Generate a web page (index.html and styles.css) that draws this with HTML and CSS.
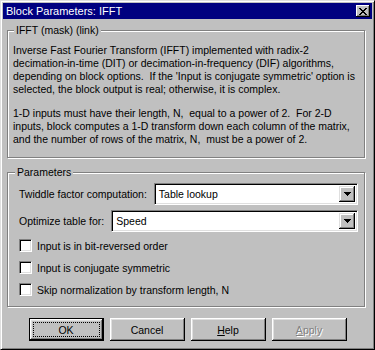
FILE: index.html
```html
<!DOCTYPE html>
<html lang="en">
<head>
  <meta charset="UTF-8">
  <title>Block Parameters: IFFT</title>
  <link rel="stylesheet" href="styles.css">
</head>
<body>
<div class="window">
  <div class="titlebar">
    <span class="title">Block Parameters: IFFT</span>
    <span class="close">
      <svg width="8" height="7" viewBox="0 0 8 7" shape-rendering="crispEdges">
        <path d="M0 0h2v1h1v1h2V1h1V0h2v1H7v1H6v1H5v1h1v1h1v1h1v1H6V6H5V5H3v1H2v1H0V6h1V5h1V4h1V3H2V2H1V1H0z" fill="#000"/>
      </svg>
    </span>
  </div>

  <div class="content">
    <fieldset class="group desc">
      <legend>IFFT (mask) (link)</legend>
      <p>Inverse Fast Fourier Transform (IFFT) implemented with radix-2<br>
decimation-in-time (DIT) or decimation-in-frequency (DIF) algorithms,<br>
depending on block options.&nbsp; If the 'Input is conjugate symmetric' option is<br>
selected, the block output is real; otherwise, it is complex.</p>
      <p>1-D inputs must have their length, N,&nbsp; equal to a power of 2.&nbsp; For 2-D<br>
inputs, block computes a 1-D transform down each column of the matrix,<br>
and the number of rows of the matrix, N,&nbsp; must be a power of 2.</p>
    </fieldset>

    <fieldset class="group params">
      <legend>Parameters</legend>
      <div class="row">
        <label>Twiddle factor computation:</label>
        <div class="combo">
          <span class="value">Table lookup</span>
          <span class="drop">
            <svg width="7" height="4" viewBox="0 0 7 4" shape-rendering="crispEdges"><path d="M0 0h7v1H6v1H5v1H4v1H3V3H2V2H1V1H0z" fill="#000"/></svg>
          </span>
        </div>
      </div>
      <div class="row">
        <label>Optimize table for:</label>
        <div class="combo">
          <span class="value">Speed</span>
          <span class="drop">
            <svg width="7" height="4" viewBox="0 0 7 4" shape-rendering="crispEdges"><path d="M0 0h7v1H6v1H5v1H4v1H3V3H2V2H1V1H0z" fill="#000"/></svg>
          </span>
        </div>
      </div>
      <div class="check first"><span class="box"></span>Input is in bit-reversed order</div>
      <div class="check"><span class="box"></span>Input is conjugate symmetric</div>
      <div class="check"><span class="box"></span>Skip normalization by transform length, N</div>
    </fieldset>

    <div class="buttons">
      <button class="btn default"><span class="focus">OK</span></button>
      <button class="btn">Cancel</button>
      <button class="btn"><u>H</u>elp</button>
      <button class="btn disabled"><u>A</u>pply</button>
    </div>
  </div>
</div>
</body>
</html>
```

FILE: styles.css
```css
body {
  margin: 0;
  font-family: "Liberation Sans", Arial, sans-serif;
  font-size: 10.5px;
  color: #000;
  background: #c0c0c0;
}
.window {
  box-sizing: border-box;
  width: 375px;
  height: 350px;
  padding: 2px;
  background: #c0c0c0;
  border: 1px solid;
  border-color: #dfdfdf #000 #000 #dfdfdf;
  box-shadow: inset 1px 1px 0 #fff, inset -1px -1px 0 #808080;
}
.titlebar {
  display: flex;
  align-items: center;
  justify-content: space-between;
  height: 16px;
  padding: 0 2px 0 3px;
  background: #000080;
  color: #fff;
  font-size: 11px;
}
.close {
  display: flex;
  align-items: center;
  justify-content: center;
  width: 14px;
  height: 12px;
  background: #c0c0c0;
  box-shadow: inset -1px -1px 0 #000, inset 1px 1px 0 #fff, inset -2px -2px 0 #808080;
}
.content {
  padding: 0 4px 0 4px;
}
.group {
  box-sizing: border-box;
  width: 358px;
  margin: 0;
  min-width: 0;
  border: 1px solid #808080;
  box-shadow: 1px 1px 0 #fff, inset 1px 1px 0 #fff;
}
.group legend {
  line-height: 13px;
  padding: 0 2px;
  background: #c0c0c0;
}
.desc {
  margin-top: 5px;
  padding: 7px 4px 11px 5px;
}
.desc legend {
  margin-left: 1px;
}
.desc p {
  margin: 0;
  line-height: 13px;
  white-space: nowrap;
}
.desc p + p {
  margin-top: 11px;
}
.params {
  margin-top: 8px;
  padding: 4px 6px 10px 11px;
}
.params legend {
  margin-left: -4px;
}
.row {
  display: flex;
  align-items: center;
  gap: 7px;
  margin-bottom: 5px;
}
.row label {
  white-space: nowrap;
}
.combo {
  flex: 1;
  display: flex;
  align-items: center;
  box-sizing: border-box;
  height: 22px;
  padding: 2px 2px 2px 4px;
  background: #fff;
  border: 1px solid;
  border-color: #808080 #fff #fff #808080;
  box-shadow: inset 1px 1px 0 #000, inset -1px -1px 0 #dfdfdf;
}
.combo .value {
  flex: 1;
}
.drop {
  display: flex;
  align-items: center;
  justify-content: center;
  width: 16px;
  height: 16px;
  background: #c0c0c0;
  box-shadow: inset -1px -1px 0 #000, inset 1px 1px 0 #dfdfdf, inset -2px -2px 0 #808080, inset 2px 2px 0 #fff;
}
.check {
  display: flex;
  align-items: center;
  gap: 5px;
  height: 13px;
  margin-top: 9px;
}
.check.first {
  margin-top: 7px;
}
.box {
  box-sizing: border-box;
  width: 13px;
  height: 13px;
  background: #fff;
  border: 1px solid;
  border-color: #808080 #fff #fff #808080;
  box-shadow: inset 1px 1px 0 #000, inset -1px -1px 0 #dfdfdf;
}
.buttons {
  display: flex;
  justify-content: center;
  gap: 6px;
  margin-top: 11px;
}
.btn {
  box-sizing: border-box;
  width: 75px;
  height: 23px;
  padding: 0;
  border: none;
  font-family: inherit;
  font-size: 10.5px;
  color: #000;
  background: #c0c0c0;
  box-shadow: inset -1px -1px 0 #000, inset 1px 1px 0 #fff, inset -2px -2px 0 #808080, inset 2px 2px 0 #dfdfdf;
}
.btn.default {
  border: 1px solid #000;
  padding: 3px;
  display: flex;
}
.btn .focus {
  flex: 1;
  display: flex;
  align-items: center;
  justify-content: center;
  border: 1px dotted #000;
}
.btn.disabled {
  color: #808080;
  text-shadow: 1px 1px 0 #fff;
}
```
